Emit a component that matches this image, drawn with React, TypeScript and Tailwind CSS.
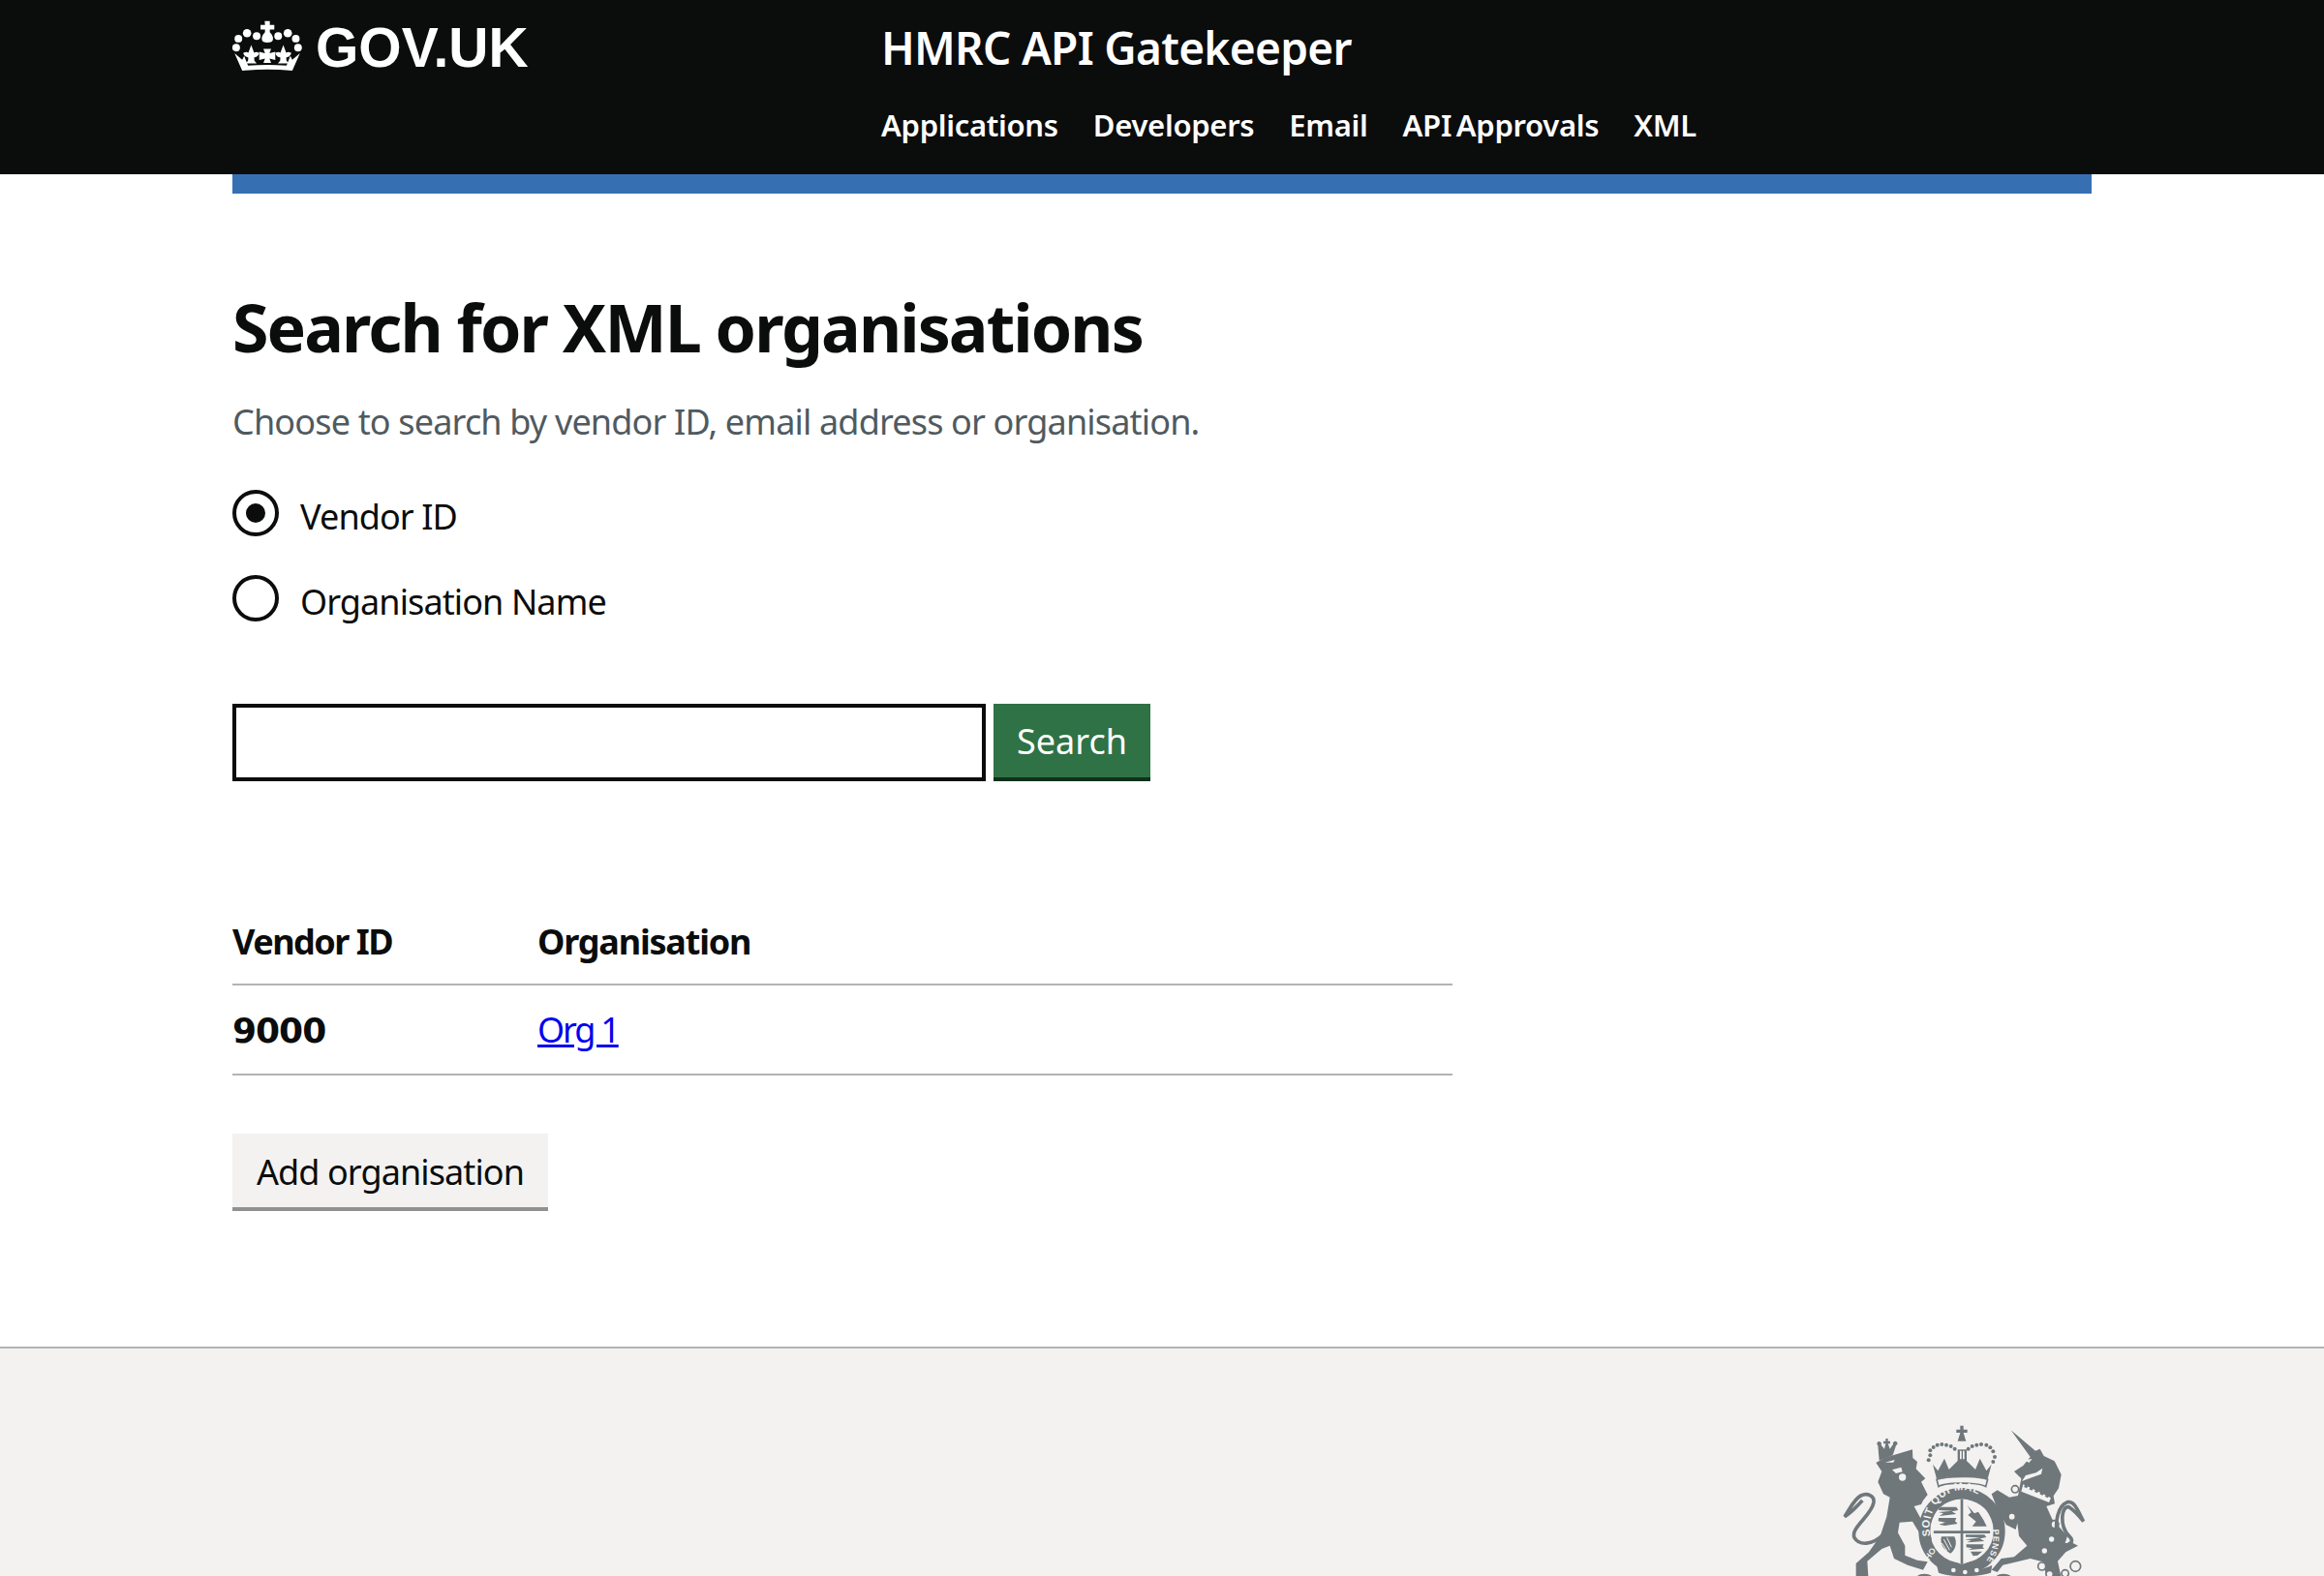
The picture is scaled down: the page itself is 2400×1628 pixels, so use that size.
import React from 'react';

const Crown = () => (
  <svg viewBox="60 63 216 160" className="w-[72px] h-[53px] block" fill="#ffffff">
    {/* cross and orb on top */}
    <path d="M160 65h16v12h14v15h-14v8c9 9 12 18 9 26-3 9-30 9-33 0-3-8 0-17 9-26v-8h-14V77h14z" />
    {[[105, 103, 13], [135, 112, 12], [78, 120, 12], [202, 112, 12], [232, 103, 13], [257, 120, 12], [71, 148, 12], [264, 148, 12]].map(([cx, cy, r]) => (
      <circle key={`${cx}-${cy}`} cx={cx} cy={cy} r={r} />
    ))}
    {/* fleurs and centre cross */}
    <path d="M118 140l9 24c5-3 10-2 16 1-2 6-5 12-16 14l1 10 7 8h-34l7-8 1-10c-11-2-14-8-16-14 6-3 11-4 16-1z" />
    <path d="M218 140l9 24c5-3 10-2 16 1-2 6-5 12-16 14l1 10 7 8h-34l7-8 1-10c-11-2-14-8-16-14 6-3 11-4 16-1z" />
    <path d="M156 152h24l-5 14 18-5v26l-18-5 5 14h-24l5-14-18 5v-26l18 5z" />
    {/* band */}
    <path d="M66 166l24 20 6-12 12 30q60-5 120 0l12-30 6 12 24-20-24 54q-78-8-156 0z" />
  </svg>
);

const Arms = () => (
  <svg viewBox="0 0 900 564" className="w-[300px] h-[188px] block" fill="#6f777b">
    <defs>
      <clipPath id="shield-clip">
        <path d="M350 395C350 360 385 330 438 325 490 330 526 360 526 395V432C526 480 490 510 438 528 386 510 350 480 350 432Z" />
      </clipPath>
    </defs>
    {/* lion crown */}
    <path d="M178 160a7 7 0 1 1 10-2l10 12 4-16h-7v-8h7v-8h7v8h7v8h-7l6 16 10-14a7 7 0 1 1 9 4l-10 30-42 16z" />
    <path d="M172 213 200 197 285 172 286 198 300 210 296 232 325 262 312 272 332 312 318 330 312 342 290 348 310 385 335 420 345 450 325 458 300 420 285 395 245 398 240 430 262 470 262 500 300 515 332 520 318 545 270 530 228 510 215 470 190 480 145 518 148 564 110 564 110 525 150 490 185 440 205 380 215 320 195 310 178 272 190 240Z" />
    <circle cx="254" cy="258" r="11" fill="#f3f2f1" />
    <path d="M222 235l28-8 4 14-20 5zM200 212l30-8-4 8z" fill="#f3f2f1" />
    {/* lion tail */}
    <path d="M195 435C160 470 120 470 105 445 92 415 160 375 165 335 167 315 145 305 125 315 105 325 95 350 75 380 100 365 115 345 130 330" fill="none" stroke="#6f777b" strokeWidth="11" />
    {/* crown */}
    <path d="M433 98h10v12h12v10h-12l8 26h-26l8-26h-12v-10h12z" />
    {[[340, 190], [335, 205], [340, 175], [350, 165], [362, 158], [376, 156], [390, 158], [404, 162], [416, 170], [458, 170], [470, 162], [484, 158], [498, 156], [514, 158], [526, 166], [535, 178], [540, 195], [535, 210]].map(([cx, cy]) => (
      <circle key={`${cx}-${cy}`} cx={cx} cy={cy} r="6" />
    ))}
    <path d="M425 172h28v36h-28z" />
    <path d="M432 176h5v26h-5zM441 176h5v26h-5z" fill="#f3f2f1" />
    <path d="M348 218l16 20 20-38 14 34 28-28h26l28 28 14-34 20 38 16-20-12 45c-20-6-45-8-79-8s-59 2-79 8z" />
    <path d="M360 265c30-12 130-12 158 0l-6 22c-20-14-126-14-146 0z" fill="#f3f2f1" stroke="#6f777b" strokeWidth="5" />
    {/* garter */}
    <circle cx="438" cy="425" r="116" fill="none" stroke="#6f777b" strokeWidth="36" />
    <path id="garter-top" d="M340 440A98 112 0 0 1 540 390" fill="none" />
    <path id="garter-right" d="M522 384A110 125 0 0 1 500 535" fill="none" />
    <text fontFamily="'Liberation Sans', sans-serif" fontWeight="700" fontSize="33" fill="#f3f2f1" letterSpacing="2">
      <textPath href="#garter-top">SOIT QUI MAL</textPath>
    </text>
    <text fontFamily="'Liberation Sans', sans-serif" fontWeight="700" fontSize="26" fill="#f3f2f1" letterSpacing="3">
      <textPath href="#garter-right" startOffset="38">PENSE</textPath>
    </text>
    <text fontFamily="'Liberation Sans', sans-serif" fontWeight="700" fontSize="26" fill="#f3f2f1" transform="rotate(-54 345 490)">
      <tspan x="318" y="498">HO</tspan>
    </text>
    {/* shield */}
    <g clipPath="url(#shield-clip)">
      <rect x="345" y="320" width="190" height="215" fill="#f3f2f1" />
      <path d="M434 320h8v215h-8zM345 424h190v8H345z" />
      <path d="M366 350h55l6 10-20 4 14 8-52 6 12-8-15-4 44-4-44-2zM366 384h55l-4 10 8 8-40 6-18-4 20-6-22-4z" />
      <path d="M455 345l22 25 12-5 16 25 10 20h-45l12-15-25-20 10-8z" />
      <path d="M375 442h40c10 20 2 42-12 52-20-10-35-30-28-52z" />
      <path d="M382 450l18 34M392 445l14 30M376 462l16 24" fill="none" stroke="#f3f2f1" strokeWidth="3" />
      <path d="M450 436h58l6 8-20 4 14 8-55 4 14-6-20-3 48-6-45-2zM452 466h54l-4 8 6 5-50 4 12-5-18-3zM465 488h36l-14 12-14 2z" />
    </g>
    {/* motto scroll */}
    <path d="M360 530c40 24 130 24 172 0l-4 24c-46 14-124 14-162 0z" />
    <circle cx="412" cy="546" r="7" fill="#f3f2f1" />
    <circle cx="448" cy="552" r="7" fill="#f3f2f1" />
    <circle cx="484" cy="546" r="7" fill="#f3f2f1" />
    <path d="M300 564c10-8 30-10 45 0zM545 564c10-8 30-10 45 0z" />
    {/* unicorn */}
    <path d="M590 112 666 176 680 170 692 192 725 208 746 250 738 292 722 316 726 340 700 348 718 388 765 440 758 462 782 462 798 470 760 490 735 518 745 564H700L688 520 650 510 600 522 565 530 548 552 530 545 560 510 600 505 640 470 615 440 610 400 605 420 575 405 548 355 530 310 548 298 585 320 612 315 622 262 600 240 628 222 650 195Z" />
    <path d="M632 205l24-4-10 12zM624 270l60-22 4-18-20 14-32 8zM628 280l86 42-6 14-86-34z" fill="#f3f2f1" />
    <path d="M632 284l82 38" fill="none" stroke="#6f777b" strokeWidth="8" strokeDasharray="10 8" />
    <circle cx="603" cy="295" r="11" fill="#f3f2f1" stroke="#6f777b" strokeWidth="5" />
    <circle cx="593" cy="380" r="11" fill="#f3f2f1" stroke="#6f777b" strokeWidth="5" />
    <circle cx="726" cy="404" r="12" fill="#f3f2f1" stroke="#6f777b" strokeWidth="5" />
    <circle cx="790" cy="534" r="16" fill="#f3f2f1" stroke="#6f777b" strokeWidth="5" />
    <circle cx="686" cy="534" r="12" fill="#f3f2f1" stroke="#6f777b" strokeWidth="5" />
    <circle cx="758" cy="556" r="11" fill="#f3f2f1" stroke="#6f777b" strokeWidth="5" />
    <circle cx="710" cy="558" r="11" fill="#f3f2f1" stroke="#6f777b" strokeWidth="5" />
    <circle cx="716" cy="450" r="8" fill="#f3f2f1" />
    <circle cx="694" cy="486" r="8" fill="#f3f2f1" />
    {/* unicorn tail */}
    <path d="M735 440C725 400 735 345 765 335 790 330 800 370 815 395 800 375 785 360 770 350 745 345 740 410 770 440 785 455 780 465 755 470" fill="none" stroke="#6f777b" strokeWidth="11" />
  </svg>
);

const navItems = ['Applications', 'Developers', 'Email', 'API Approvals', 'XML'];

const App: React.FC = () => {
  return (
    <div className="min-h-[1628px] flex flex-col bg-white text-[#0b0c0c] font-['Noto_Sans',sans-serif]">
      {/* Header */}
      <header className="h-[180px] bg-[#0b0c0c] text-white shrink-0">
        <div className="w-[1920px] mx-auto flex">
          <div className="w-[670px] flex items-start gap-[14px] pt-[21px]">
            <Crown />
            <span className="font-['Liberation_Sans',sans-serif] font-bold text-[57px] leading-[56px]">GOV.UK</span>
          </div>
          <div>
            <div className="pt-[18px] text-[46px] leading-[62px] font-semibold tracking-[-0.7px]">HMRC API Gatekeeper</div>
            <nav className="flex gap-[36px] mt-[27px] text-[31px] leading-[44px] font-semibold tracking-[-0.3px] [word-spacing:-3px]">
              {navItems.map(item => (
                <a key={item} href="#">{item}</a>
              ))}
            </nav>
          </div>
        </div>
      </header>

      {/* Main */}
      <main className="w-[1920px] mx-auto flex-1">
        <div className="h-[20px] bg-[#3670b2]" />
        <h1 className="mt-[94px] text-[68px] leading-[88px] font-bold tracking-[-1.9px]">Search for XML organisations</h1>
        <p className="mt-[24px] text-[36px] leading-[60px] text-[#505a5f] tracking-[-0.83px]">Choose to search by vendor ID, email address or organisation.</p>

        <div className="mt-[40px] flex flex-col gap-[40px]">
          <label className="flex items-center gap-[22px] h-[48px]">
            <span className="w-[48px] h-[48px] rounded-full border-[4px] border-[#0b0c0c] flex items-center justify-center">
              <span className="w-[20px] h-[20px] rounded-full bg-[#0b0c0c]" />
            </span>
            <span className="text-[36px] leading-[48px] pt-[8px] tracking-[-0.9px]">Vendor ID</span>
          </label>
          <label className="flex items-center gap-[22px] h-[48px]">
            <span className="w-[48px] h-[48px] rounded-full border-[4px] border-[#0b0c0c]" />
            <span className="text-[36px] leading-[48px] pt-[8px] tracking-[-0.9px]">Organisation Name</span>
          </label>
        </div>

        <form className="mt-[85px] flex gap-[8px]">
          <input type="text" className="w-[778px] h-[80px] border-[4px] border-[#0b0c0c] bg-white outline-none" />
          <button type="button" className="w-[162px] h-[80px] pt-[2px] bg-[#2f7245] border-b-[4px] border-[#10311b] text-white text-[36px]">Search</button>
        </form>

        <table className="mt-[129px] w-[1260px] text-[36px] text-left border-collapse">
          <thead>
            <tr className="border-b-2 border-[#b1b4b6] h-[81px]">
              <th className="w-[315px] font-bold pb-[7px] tracking-[-1.5px]">Vendor ID</th>
              <th className="font-bold pb-[7px] tracking-[-1.2px]">Organisation</th>
            </tr>
          </thead>
          <tbody>
            <tr className="border-b-2 border-[#b1b4b6] h-[93px]">
              <td className="font-['DejaVu_Sans',sans-serif] text-[36px] font-bold tracking-[-1px] pt-[2px]">9000</td>
              <td><a href="#" className="text-[#0000ee] underline tracking-[-2.2px]">Org 1</a></td>
            </tr>
          </tbody>
        </table>

        <button type="button" className="block mt-[60px] w-[326px] h-[80px] pt-[3px] bg-[#f3f2f1] border-b-[4px] border-[#929191] text-[36px] tracking-[-0.9px] whitespace-nowrap">Add organisation</button>
      </main>

      {/* Footer */}
      <footer className="h-[237px] shrink-0 overflow-hidden border-t-2 border-[#b1b4b6] bg-[#f3f2f1] flex justify-end pr-[220px] pt-[47px]">
        <Arms />
      </footer>
    </div>
  );
};

export default App;
